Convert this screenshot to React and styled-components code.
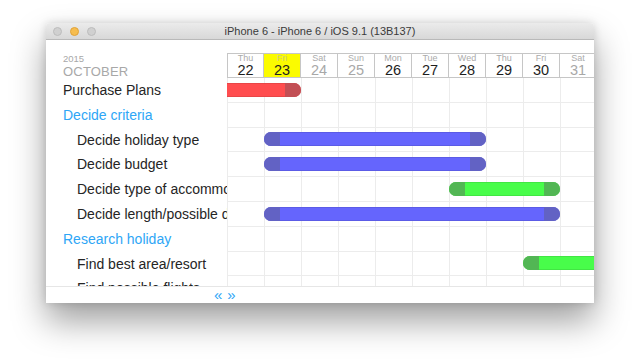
import React from 'react';
import styled, { createGlobalStyle } from 'styled-components';

const GlobalStyle = createGlobalStyle`
  html, body {
    margin: 0;
    background: #ffffff;
    font-family: "Liberation Sans", Arial, sans-serif;
  }
`;

const COL = 37;
const ROW = 24.8;

const days = [
  { name: 'Thu', num: 22 },
  { name: 'Fri', num: 23, today: true },
  { name: 'Sat', num: 24, weekend: true },
  { name: 'Sun', num: 25, weekend: true },
  { name: 'Mon', num: 26 },
  { name: 'Tue', num: 27 },
  { name: 'Wed', num: 28 },
  { name: 'Thu', num: 29 },
  { name: 'Fri', num: 30 },
  { name: 'Sat', num: 31, weekend: true },
];

const palette = {
  red: { main: '#ff4d4f', cap: '#c24f55' },
  blue: { main: '#6565fd', cap: '#6262c4' },
  green: { main: '#48fd4a', cap: '#52b654' },
};

const tasks = [
  { label: 'Purchase Plans', level: 0, bar: { from: -1, to: 2, color: 'red', noStart: true } },
  { label: 'Decide criteria', level: 0, group: true },
  { label: 'Decide holiday type', level: 1, bar: { from: 1, to: 7, color: 'blue' } },
  { label: 'Decide budget', level: 1, bar: { from: 1, to: 7, color: 'blue' } },
  { label: 'Decide type of accommodation', level: 1, bar: { from: 6, to: 9, color: 'green' } },
  { label: 'Decide length/possible dates', level: 1, bar: { from: 1, to: 9, color: 'blue' } },
  { label: 'Research holiday', level: 0, group: true },
  { label: 'Find best area/resort', level: 1, bar: { from: 8, to: 12, color: 'green', noEnd: true } },
  { label: 'Find possible flights', level: 1 },
];

const Stage = styled.div`
  padding: 23px 0 0 46px;
  height: 360px;
  box-sizing: border-box;
`;

const Window = styled.div`
  width: 548px;
  height: 280px;
  display: flex;
  flex-direction: column;
  background: #fff;
  border-radius: 4px 4px 0 0;
  overflow: hidden;
  box-shadow: 0 18px 34px rgba(0, 0, 0, 0.38), 0 0 8px rgba(0, 0, 0, 0.14);
`;

const TitleBar = styled.div`
  height: 16px;
  flex: none;
  display: flex;
  align-items: center;
  background: linear-gradient(#ebebeb, #d8d8d8);
  border-bottom: 1px solid #b9b9b9;
`;

const Lights = styled.div`
  display: flex;
  gap: 8px;
  padding-left: 7px;
`;

const Light = styled.span`
  width: 9px;
  height: 9px;
  border-radius: 50%;
  background: ${p => (p.active ? '#f6bd4f' : '#d0d0d0')};
  border: 0.5px solid ${p => (p.active ? '#e0a23a' : '#bcbcbc')};
  box-sizing: border-box;
`;

const Title = styled.div`
  flex: 1;
  text-align: center;
  margin-left: -50px;
  font-size: 11px;
  color: #3a3a3a;
`;

const Content = styled.div`
  flex: 1;
  display: flex;
  flex-direction: column;
  min-height: 0;
`;

const Header = styled.div`
  height: 38px;
  flex: none;
  display: flex;
`;

const MonthBox = styled.div`
  width: 181px;
  flex: none;
  padding: 14px 0 0 17px;
  box-sizing: border-box;
  color: #a8a8a8;
`;

const Year = styled.div`
  font-size: 9.5px;
  line-height: 10px;
`;

const Month = styled.div`
  font-size: 13px;
  line-height: 15px;
  letter-spacing: 0.2px;
`;

const DayStrip = styled.div`
  display: flex;
  padding-top: 13px;
  overflow: hidden;
`;

const DayCell = styled.div`
  width: ${COL}px;
  height: 25px;
  flex: none;
  box-sizing: border-box;
  border: 1.5px solid #c6c6c6;
  border-left-width: ${p => (p.first ? '1.5px' : '0')};
  background: ${p => (p.today ? '#fbfb00' : '#fff')};
  display: flex;
  flex-direction: column;
  align-items: center;
  justify-content: center;
`;

const DayName = styled.div`
  font-size: 9px;
  line-height: 9px;
  color: ${p => (p.today ? '#cccc80' : '#ababab')};
`;

const DayNum = styled.div`
  font-size: 14.5px;
  line-height: 15px;
  color: ${p => (p.weekend ? '#a8a8a8' : '#1e1e1e')};
`;

const Rows = styled.div`
  flex: 1;
  min-height: 0;
  overflow: hidden;
`;

const Row = styled.div`
  height: ${ROW}px;
  display: flex;
`;

const Label = styled.div`
  width: 181px;
  flex: none;
  box-sizing: border-box;
  padding-left: ${p => (p.level ? 31 : 17)}px;
  font-size: 14px;
  line-height: ${ROW}px;
  white-space: nowrap;
  overflow: hidden;
  color: ${p => (p.group ? '#2ea6f6' : '#252525')};
`;

const Track = styled.div`
  flex: 1;
  display: flex;
  position: relative;
  overflow: hidden;
  border-bottom: 1px solid #ececec;
`;

const GridCell = styled.div`
  width: ${COL}px;
  flex: none;
  border-left: 1px solid #ececec;
  box-sizing: border-box;
`;

const Bar = styled.div`
  position: absolute;
  top: 50%;
  height: 14px;
  margin-top: -7px;
  display: flex;
  overflow: hidden;
  border-radius: ${p => (p.noStart ? '0 7px 7px 0' : p.noEnd ? '7px 0 0 7px' : '7px')};
  background: ${p => p.main};
  box-shadow: inset 0 0 0 0.5px rgba(0, 0, 0, 0.18);
`;

const Cap = styled.div`
  width: 16px;
  flex: none;
  background: ${p => p.color};
`;

const Fill = styled.div`
  flex: 1;
`;

const Footer = styled.div`
  height: 16px;
  flex: none;
  border-top: 1px solid #e6e6e6;
  display: flex;
  align-items: center;
  gap: 5px;
  padding-left: 168px;
  color: #2ea6f6;
  font-size: 15px;
`;

const Arrow = styled.span`
  line-height: 14px;
`;

const GanttBar = ({ bar }) => {
  const colors = palette[bar.color];
  return (
    <Bar
      main={colors.main}
      noStart={bar.noStart}
      noEnd={bar.noEnd}
      style={{ left: bar.from * COL, width: (bar.to - bar.from) * COL }}
    >
      {!bar.noStart && <Cap color={colors.cap} />}
      <Fill />
      {!bar.noEnd && <Cap color={colors.cap} />}
    </Bar>
  );
};

const App = () => (
  <Stage>
    <GlobalStyle />
    <Window>
      <TitleBar>
        <Lights>
          <Light />
          <Light active />
          <Light />
        </Lights>
        <Title>iPhone 6 - iPhone 6 / iOS 9.1 (13B137)</Title>
      </TitleBar>
      <Content>
        <Header>
          <MonthBox>
            <Year>2015</Year>
            <Month>OCTOBER</Month>
          </MonthBox>
          <DayStrip>
            {days.map((d, i) => (
              <DayCell key={d.num} first={i === 0} today={d.today}>
                <DayName today={d.today}>{d.name}</DayName>
                <DayNum weekend={d.weekend}>{d.num}</DayNum>
              </DayCell>
            ))}
          </DayStrip>
        </Header>
        <Rows>
          {tasks.map(t => (
            <Row key={t.label}>
              <Label level={t.level} group={t.group}>{t.label}</Label>
              <Track>
                {days.map(d => <GridCell key={d.num} />)}
                {t.bar && <GanttBar bar={t.bar} />}
              </Track>
            </Row>
          ))}
        </Rows>
        <Footer>
          <Arrow>«</Arrow>
          <Arrow>»</Arrow>
        </Footer>
      </Content>
    </Window>
  </Stage>
);

export default App;
